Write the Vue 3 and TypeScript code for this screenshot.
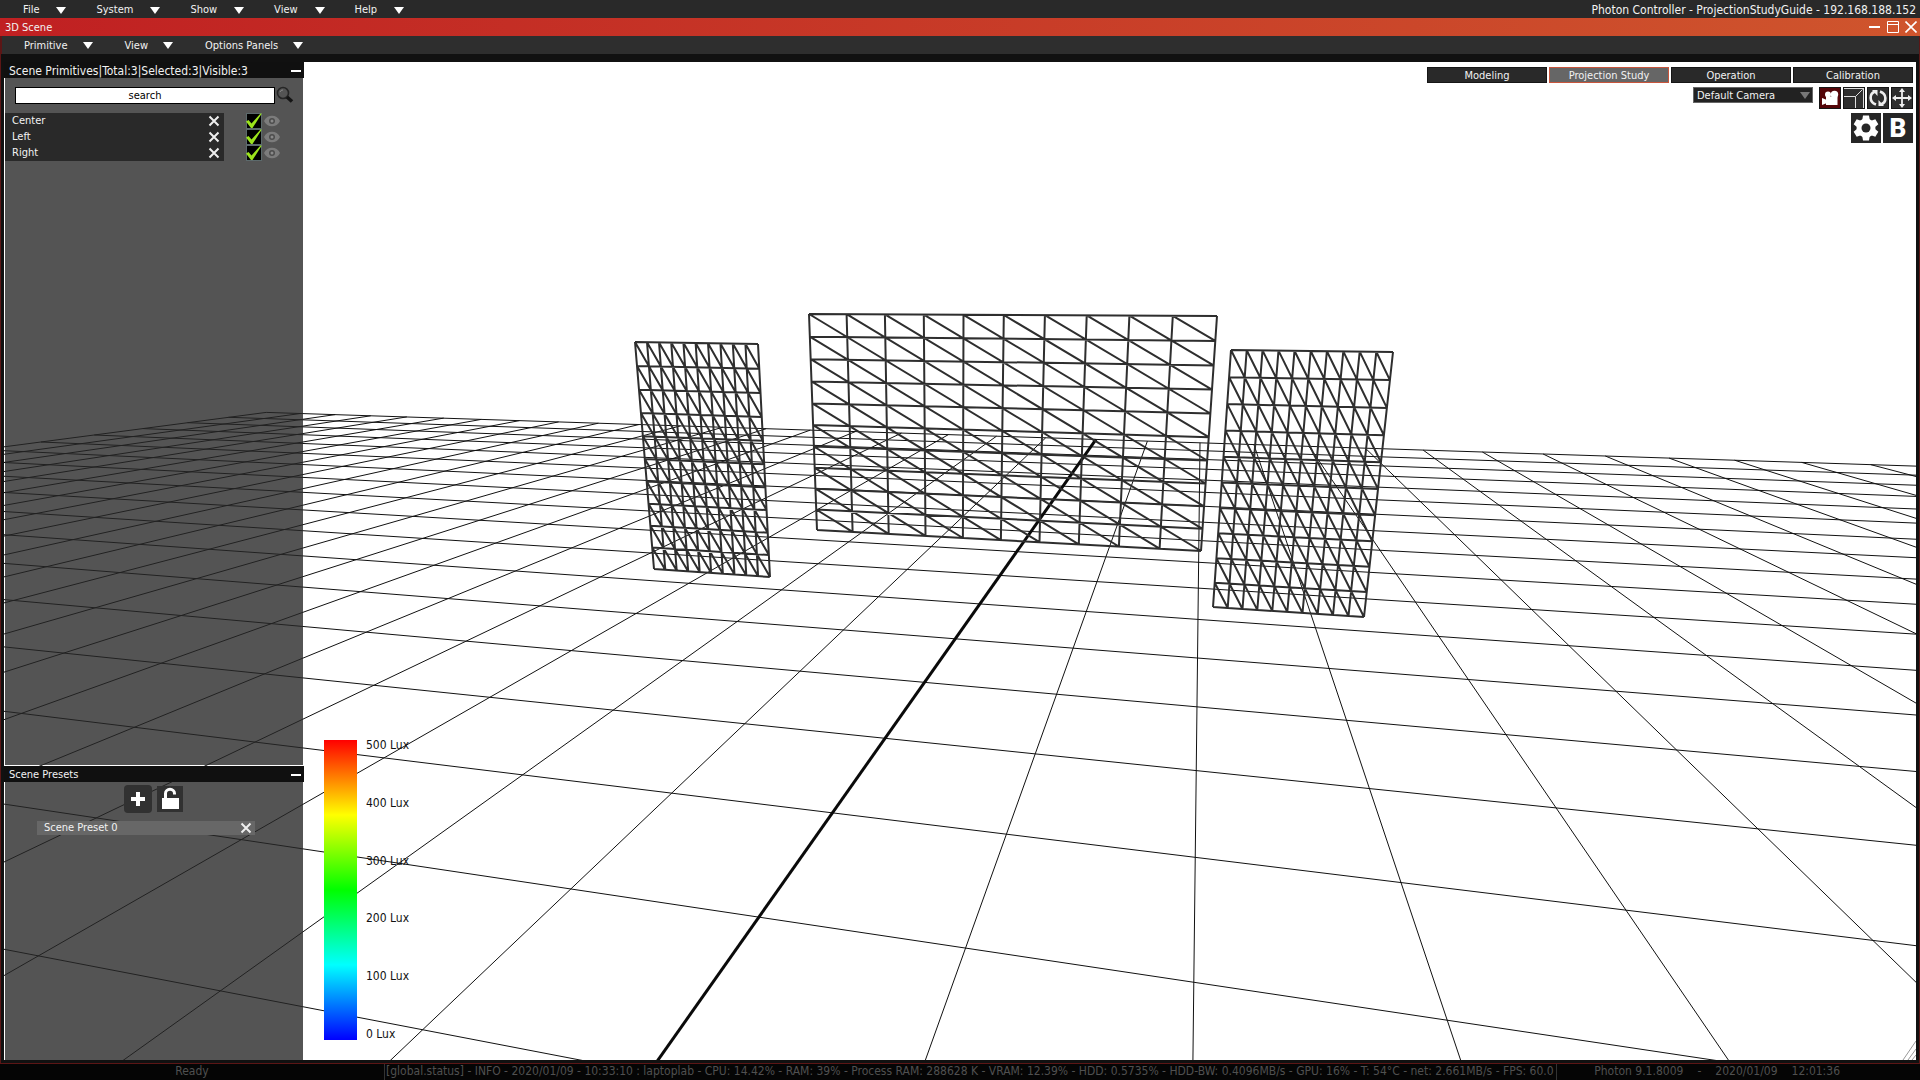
<script setup lang="ts">
import { ref } from 'vue'

type Point = [number, number]
/** Row-major 3x3 projective matrix with the last entry fixed to 1. */
type Projection = [number, number, number, number, number, number, number, number]

const mainMenu = ['File', 'System', 'Show', 'View', 'Help']
const sceneMenu = ['Primitive', 'View', 'Options Panels']
const modes = ['Modeling', 'Projection Study', 'Operation', 'Calibration']
const activeMode = ref('Projection Study')
const camera = ref('Default Camera')
const query = ref('')
const primitives = ref([
  { name: 'Center', selected: true },
  { name: 'Left', selected: true },
  { name: 'Right', selected: true },
])
const presets = ['Scene Preset 0']
const luxLabels = ['500 Lux', '400 Lux', '300 Lux', '200 Lux', '100 Lux', '0 Lux']

const depth = (p: Projection, u: number, v: number) => p[6] * u + p[7] * v + 1

function project(p: Projection, u: number, v: number): Point {
  const w = depth(p, u, v)
  return [(p[0] * u + p[1] * v + p[2]) / w, (p[3] * u + p[4] * v + p[5]) / w]
}

const segment = (a: Point, b: Point) =>
  `M${a[0].toFixed(1)} ${a[1].toFixed(1)}L${b[0].toFixed(1)} ${b[1].toFixed(1)}`

/* Floor: 40 x 40 cells, u across, v from the far edge towards the camera. */
const floor: Projection = [38.485, -57.17, 1096, -3.3, -13.77, 439.4, -0.01128, -0.04757]
const NEAR = 0.06

function floorLine(u0: number, v0: number, u1: number, v1: number): string {
  const w0 = depth(floor, u0, v0)
  const w1 = depth(floor, u1, v1)
  if (w0 < NEAR && w1 < NEAR) return ''
  let [a, b] = [0, 1]
  if (w0 < NEAR) a = (NEAR - w0) / (w1 - w0)
  if (w1 < NEAR) b = (NEAR - w0) / (w1 - w0)
  const at = (t: number) => project(floor, u0 + (u1 - u0) * t, v0 + (v1 - v0) * t)
  return segment(at(a), at(b))
}

let floorPath = ''
for (let u = -20; u <= 20; u++) floorPath += floorLine(u, 0, u, 40)
for (let v = 0; v <= 40; v++) floorPath += floorLine(-20, v, 20, v)
const axisPath = floorLine(0, 0, 0, 40)

/* Unit square to quad, corners clockwise from the top left. */
function quad([p0, p1, p2, p3]: Point[]): Projection {
  const sx = p0[0] - p1[0] + p2[0] - p3[0]
  const sy = p0[1] - p1[1] + p2[1] - p3[1]
  const dx1 = p1[0] - p2[0]
  const dx2 = p3[0] - p2[0]
  const dy1 = p1[1] - p2[1]
  const dy2 = p3[1] - p2[1]
  const det = dx1 * dy2 - dx2 * dy1
  const g = (sx * dy2 - dx2 * sy) / det
  const h = (dx1 * sy - sx * dy1) / det
  return [
    p1[0] - p0[0] + g * p1[0], p3[0] - p0[0] + h * p3[0], p0[0],
    p1[1] - p0[1] + g * p1[1], p3[1] - p0[1] + h * p3[1], p0[1],
    g, h,
  ]
}

function mesh(corners: Point[], n = 10): string {
  const p = quad(corners)
  let d = ''
  for (let i = 0; i <= n; i++) {
    d += segment(project(p, i / n, 0), project(p, i / n, 1))
    d += segment(project(p, 0, i / n), project(p, 1, i / n))
  }
  for (let k = -n + 1; k < n; k++) {
    const from = Math.max(0, k)
    const to = Math.min(n, n + k)
    d += segment(project(p, from / n, (from - k) / n), project(p, to / n, (to - k) / n))
  }
  return d
}

const screens = [
  mesh([[635, 342], [758, 344], [770, 577], [654, 569]]),
  mesh([[809, 314], [1217, 316], [1201, 551], [817, 530]]),
  mesh([[1231, 350], [1393, 352], [1364, 617], [1213, 607]]),
]
</script>

<template>
  <div class="app">
    <header class="bar top">
      <nav class="menu">
        <button v-for="item in mainMenu" :key="item" type="button">
          {{ item }}<svg width="10" height="7" viewBox="0 0 10 7"><path d="M0 0h10L5 7z" fill="#fff" /></svg>
        </button>
      </nav>
      <span class="host">Photon Controller - ProjectionStudyGuide - 192.168.188.152</span>
    </header>

    <section class="window">
      <div class="bar title">
        <h1>3D Scene</h1>
        <div class="controls">
          <button type="button" aria-label="Minimize">
            <svg width="12" height="12" viewBox="0 0 12 12"><path d="M0 6h11" stroke="#fff" stroke-width="2" /></svg>
          </button>
          <button type="button" aria-label="Maximize">
            <svg width="12" height="12" viewBox="0 0 12 12"><path d="M.5.5h11v11H.5zM0 3.5h12" fill="none" stroke="#fff" /></svg>
          </button>
          <button type="button" aria-label="Close">
            <svg width="12" height="12" viewBox="0 0 12 12"><path d="M.5.5l11 11M11.5.5l-11 11" stroke="#fff" stroke-width="1.6" /></svg>
          </button>
        </div>
      </div>
      <nav class="bar menu sub">
        <button v-for="item in sceneMenu" :key="item" type="button">
          {{ item }}<svg width="10" height="7" viewBox="0 0 10 7"><path d="M0 0h10L5 7z" fill="#fff" /></svg>
        </button>
      </nav>

      <main class="viewport">
        <svg class="scene" viewBox="4 62 1912 998" preserveAspectRatio="xMinYMin slice" aria-hidden="true">
          <path :d="floorPath" class="floor" />
          <path :d="axisPath" class="axis" />
          <path v-for="(d, i) in screens" :key="i" :d="d" class="mesh" />
          <path d="M1903 1060l13-19M1908 1060l8-11M1912 1060l4-5" class="grip" />
        </svg>

        <aside class="side">
          <section class="panel primitives">
            <h2>Scene Primitives|Total:3|Selected:3|Visible:3<button type="button" aria-label="Collapse primitives"><i /></button></h2>
            <div class="body">
              <form class="search" @submit.prevent>
                <input v-model="query" type="text" placeholder="search" aria-label="search" />
                <button type="submit" aria-label="Find">
                  <svg width="18" height="18" viewBox="0 0 18 18">
                    <circle cx="7" cy="7" r="5.500" fill="none" stroke="#262626" stroke-width="1.600" />
                    <path d="M4 6a3 3 0 0 1 3-2" fill="none" stroke="#888" />
                    <path d="M11 11l5 4.500" stroke="#141414" stroke-width="3.600" />
                  </svg>
                </button>
              </form>
              <ul>
                <li v-for="item in primitives" :key="item.name">
                  <div class="entry">
                    <span>{{ item.name }}</span>
                    <button type="button" :aria-label="'Remove ' + item.name">
                      <svg width="12" height="12" viewBox="0 0 12 12"><path d="M1.500 1.500l9 9M10.500 1.500l-9 9" stroke="#eee" stroke-width="2" /></svg>
                    </button>
                  </div>
                  <label class="tick">
                    <input v-model="item.selected" type="checkbox" :aria-label="'Select ' + item.name" />
                    <svg v-if="item.selected" width="16" height="16" viewBox="0 0 16 16"><path d="M0 8.500l2.500-1.500 3 3.500L14.500.500h1.300L6.500 15 5 15z" fill="#9be31c" /></svg>
                  </label>
                  <button class="eye" type="button" :aria-label="'Show ' + item.name">
                    <svg width="16" height="12" viewBox="0 0 16 12">
                      <path d="M0 6C3-1 13-1 16 6 13 13 3 13 0 6z" fill="#7c7c7c" />
                      <circle cx="8" cy="6" r="3" fill="#4d4d4d" /><circle cx="8" cy="6" r="1.500" fill="#8a8a8a" />
                    </svg>
                  </button>
                </li>
              </ul>
            </div>
          </section>

          <section class="panel presets">
            <h2>Scene Presets<button type="button" aria-label="Collapse presets"><i /></button></h2>
            <div class="body">
              <div class="tools">
                <button class="add" type="button" aria-label="Add preset">
                  <svg width="14" height="14" viewBox="0 0 14 14"><path d="M7 0v14M0 7h14" stroke="#fff" stroke-width="4" /></svg>
                </button>
                <button class="lock" type="button" aria-label="Unlock presets">
                  <svg width="26" height="26" viewBox="0 0 26 26">
                    <path d="M5 12h17v11H5z" fill="#fff" />
                    <path d="M8.500 13V7.500a4.500 4.200 0 0 1 9 0V8.500" fill="none" stroke="#fff" stroke-width="3" />
                  </svg>
                </button>
              </div>
              <div v-for="name in presets" :key="name" class="preset">
                <span>{{ name }}</span>
                <button type="button" :aria-label="'Remove ' + name">
                  <svg width="12" height="12" viewBox="0 0 12 12"><path d="M1.500 1.500l9 9M10.500 1.500l-9 9" stroke="#eee" stroke-width="2" /></svg>
                </button>
              </div>
            </div>
          </section>
        </aside>

        <div class="legend">
          <div class="ramp" />
          <ul><li v-for="label in luxLabels" :key="label">{{ label }}</li></ul>
        </div>

        <div class="hud">
          <div class="modes">
            <button
              v-for="mode in modes" :key="mode" type="button"
              :class="{ active: mode === activeMode }" @click="activeMode = mode"
            >{{ mode }}</button>
          </div>
          <div class="row">
            <div class="camera">
              <select v-model="camera" aria-label="Camera"><option>Default Camera</option></select>
              <svg width="10" height="7" viewBox="0 0 10 7"><path d="M0 0h10L5 7z" fill="#777" /></svg>
            </div>
            <div class="icons">
              <button class="on" type="button" aria-label="Camera view">
                <svg width="20" height="20" viewBox="0 0 20 20">
                  <circle cx="8" cy="6.500" r="3" fill="#fff" /><circle cx="14.500" cy="6.500" r="3.700" fill="#fff" />
                  <path d="M6 8.500h11.500V17H6zM2 10l5 2v3l-5 2z" fill="#fff" />
                </svg>
              </button>
              <button type="button" aria-label="Scale">
                <svg width="20" height="20" viewBox="0 0 20 20"><path d="M0 8.500h11.500V20M19.500 0v20M0 .500h20M11.500 8.500l7-7" fill="none" stroke="#ddd" /></svg>
              </button>
              <button type="button" aria-label="Rotate">
                <svg width="20" height="20" viewBox="0 0 20 20">
                  <path d="M8 16.500C1 14 1 6 7 3.500M12 3.500C19 6 19 14 13 16.500" fill="none" stroke="#eee" stroke-width="2.600" />
                  <path d="M4 2h5.500V8zM16 18h-5.500V12z" fill="#eee" />
                </svg>
              </button>
              <button type="button" aria-label="Move">
                <svg width="20" height="20" viewBox="0 0 20 20">
                  <path d="M10 3v14M3 10h14" stroke="#eee" stroke-width="1.800" />
                  <path d="M10 0l3 4H7zM10 20l3-4H7zM0 10l4-3v6zM20 10l-4-3v6z" fill="#eee" />
                </svg>
              </button>
            </div>
          </div>
          <div class="row large">
            <button type="button" aria-label="Settings">
              <svg width="28" height="28" viewBox="0 0 28 28">
                <g fill="#fff">
                  <circle cx="14" cy="14" r="9.500" />
                  <path v-for="a in [0, 60, 120]" :key="a" :transform="`rotate(${a} 14 14)`" d="M11 1.500h6l1 6h-8zM10 20.500h8l-1 6h-6z" />
                </g>
                <circle cx="14" cy="14" r="4.500" fill="#262626" />
              </svg>
            </button>
            <button class="letter" type="button">B</button>
          </div>
        </div>
      </main>
    </section>

    <footer class="status">
      <span class="state">Ready</span>
      <span class="log">[global.status] - INFO - 2020/01/09 - 10:33:10 : laptoplab - CPU: 14.42% - RAM: 39% - Process RAM: 288628 K - VRAM: 12.39% - HDD: 0.5735% - HDD-BW: 0.4096MB/s - GPU: 16% - T: 54°C - net: 2.661MB/s - FPS: 60.0</span>
      <span class="version"><span>Photon 9.1.8009</span><span>-</span><span>2020/01/09</span><span>12:01:36</span></span>
    </footer>
  </div>
</template>

<style>
body {
  background: #000;
}
</style>

<style scoped>
.app {
  display: flex;
  flex-direction: column;
  height: 100vh;
  overflow: hidden;
  color: #f2f2f2;
  font: 11px/16px "DejaVu Sans Condensed", "DejaVu Sans", sans-serif;
}

.app * {
  box-sizing: border-box;
}

button,
input,
select {
  margin: 0;
  padding: 0;
  border: 0;
  background: none;
  color: inherit;
  font: inherit;
}

svg {
  display: block;
  flex: none;
}

h1,
h2,
ul {
  margin: 0;
  padding: 0;
  font: inherit;
  list-style: none;
}

.bar {
  display: flex;
  align-items: center;
  justify-content: space-between;
  flex: none;
  height: 18px;
}

.top {
  padding: 2px 4px 0 23px;
  background: #292929;
}

.host {
  font-size: 12px;
}

.menu {
  display: flex;
  justify-content: flex-start;
  gap: 30px;
}

.menu button {
  display: flex;
  align-items: center;
  gap: 17px;
}

.window {
  display: flex;
  flex-direction: column;
  flex: 1;
  min-height: 0;
  border-bottom: 1px solid #5c1616;
}

.title {
  padding: 0 3px 0 5px;
  background: linear-gradient(90deg, #c02022, #cf552d);
}

.title h1 {
  padding-top: 1px;
}

.controls {
  display: flex;
  gap: 6px;
}

.sub {
  gap: 32px;
  padding: 1px 0 0 22px;
  border: solid #5c1616;
  border-width: 0 1px 0 2px;
  background: #2e2e2e;
}

.sub button {
  gap: 15px;
}

.viewport {
  position: relative;
  display: flex;
  flex: 1;
  min-height: 0;
  border: solid #111;
  border-width: 8px 3px 3px 3px;
  background: #fff;
  margin: 0 1px;
  box-shadow: -1px 0 #5c1616, 1px 0 #5c1616;
}

.scene {
  position: absolute;
  inset: 0;
  width: 100%;
  height: 100%;
}

.scene path {
  fill: none;
}

.floor {
  stroke: #111;
  stroke-width: 1;
}

.axis {
  stroke: #0a0a0a;
  stroke-width: 3;
}

.mesh {
  stroke: #2e2e2e;
  stroke-width: 2;
}

.grip {
  stroke: #999;
}

.side {
  position: relative;
  display: flex;
  flex-direction: column;
  gap: 1px;
  width: 300px;
}

.panel {
  display: flex;
  flex-direction: column;
}

.primitives {
  flex: 703;
}

.presets {
  flex: 294;
}

.panel h2 {
  display: flex;
  align-items: center;
  justify-content: space-between;
  height: 16px;
  padding: 1px 3px 0 5px;
  background: #101010;
}

.primitives h2 {
  font-size: 12px;
}

.panel h2 button {
  padding: 7px 0;
}

.panel h2 i {
  display: block;
  width: 10px;
  height: 2px;
  background: #fff;
}

.body {
  flex: 1;
  margin: 0 1px;
  background: rgba(38, 38, 38, 0.79);
}

.search {
  display: flex;
  align-items: center;
  gap: 1px;
  padding: 8px 9px 9px 10px;
}

.search input {
  flex: 1;
  min-width: 0;
  height: 17px;
  border: 1px solid #000;
  background: #fff;
  color: #000;
  text-align: center;
}

.search input::placeholder {
  color: #000;
  opacity: 1;
}

.body li {
  display: flex;
  align-items: center;
  height: 16px;
}

.entry {
  display: flex;
  align-items: center;
  justify-content: space-between;
  width: 219px;
  height: 16px;
  padding: 0 4px 0 7px;
  background: #292929;
}

.tick {
  position: relative;
  margin: 0 2px 0 22px;
}

.tick input {
  display: block;
  width: 16px;
  height: 16px;
  appearance: none;
  border: 1px solid #5c6a6c;
  background: #000;
}

.tick svg {
  position: absolute;
  inset: 0;
}

.tools {
  display: flex;
  align-items: center;
  justify-content: center;
  gap: 5px;
  height: 34px;
  margin: 0 1px 5px 0;
}

.tools button {
  display: grid;
  place-items: center;
  width: 26px;
  height: 26px;
  background: #313131;
}

.tools .add {
  width: 28px;
  height: 28px;
  border-radius: 4px;
}

.preset {
  display: flex;
  align-items: center;
  justify-content: space-between;
  height: 14px;
  margin: 0 48px 0 32px;
  padding: 0 3px 0 7px;
  background: #676767;
}

.legend {
  position: absolute;
  left: 320px;
  bottom: 20px;
  display: flex;
  gap: 9px;
  color: #111;
  font-size: 12px;
}

.ramp {
  width: 33px;
  height: 300px;
  background: linear-gradient(#f00, #ff0 25%, #0f0 50%, #0ff 75%, #00f);
}

.legend ul {
  display: flex;
  flex-direction: column;
  justify-content: space-between;
  margin: -3px 0 -2px;
}

.hud {
  position: relative;
  display: flex;
  flex-direction: column;
  align-items: flex-end;
  gap: 4px;
  margin-left: auto;
  padding: 5px 3px;
}

.modes,
.row,
.icons {
  display: flex;
  gap: 2px;
}

.modes button {
  width: 120px;
  height: 16px;
  padding-top: 1px;
  border: 1px solid #161616;
  background: #292929;
  line-height: 14px;
}

.modes .active {
  border-color: #c8553c;
  background: #666;
}

.row {
  gap: 6px;
  align-items: flex-start;
}

.row.large {
  gap: 2px;
}

.camera {
  position: relative;
}

.camera select {
  display: block;
  width: 120px;
  height: 16px;
  padding: 1px 16px 0 3px;
  appearance: none;
  border: 1px solid #666;
  background: #222;
  line-height: 14px;
}

.camera svg {
  position: absolute;
  top: 5px;
  right: 3px;
  pointer-events: none;
}

.icons button {
  width: 22px;
  height: 22px;
  border: 1px solid #151515;
  background: #2e2e2e;
}

.icons .on {
  background: #550508;
}

.large button {
  display: grid;
  place-items: center;
  width: 30px;
  height: 30px;
  background: #262626;
}

.large .letter {
  color: #fff;
  font: 900 26px/30px Roboto, sans-serif;
}

.status {
  display: flex;
  flex: none;
  height: 16px;
  background: #050505;
  color: #505050;
  font-size: 12px;
  line-height: 15px;
  white-space: nowrap;
}

.state {
  width: 20%;
  text-align: center;
}

.log {
  padding: 0 2px 0 1px;
  border: solid #333;
  border-width: 0 1px;
}

.version {
  display: flex;
  gap: 14px;
  margin-left: auto;
  padding-right: 80px;
}
</style>
